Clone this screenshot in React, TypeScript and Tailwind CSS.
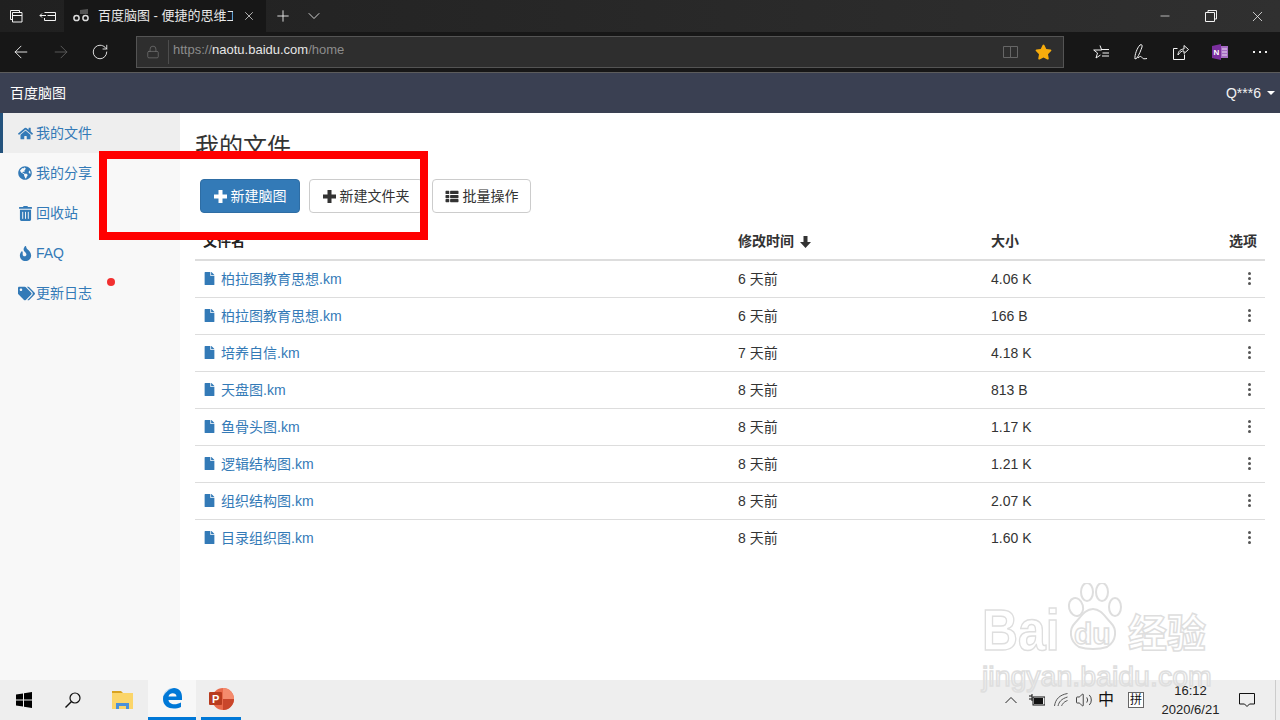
import React from "react";
import { FaHome, FaGlobeAmericas, FaTrashAlt, FaFire, FaTags, FaFile, FaThList, FaStar } from "react-icons/fa";
import { ArrowLeft, ArrowRight, RotateCw, Lock, Plus, ChevronDown, X, Minus, Volume2 } from "lucide-react";

const files = [
  ["柏拉图教育思想.km", "6 天前", "4.06 K"],
  ["柏拉图教育思想.km", "6 天前", "166 B"],
  ["培养自信.km", "7 天前", "4.18 K"],
  ["天盘图.km", "8 天前", "813 B"],
  ["鱼骨头图.km", "8 天前", "1.17 K"],
  ["逻辑结构图.km", "8 天前", "1.21 K"],
  ["组织结构图.km", "8 天前", "2.07 K"],
  ["目录组织图.km", "8 天前", "1.60 K"],
];

const nav = [
  { icon: <FaHome className="w-[15px] h-[15px]" />, label: "我的文件", active: true },
  { icon: <FaGlobeAmericas className="w-[14px] h-[14px]" />, label: "我的分享" },
  { icon: <FaTrashAlt className="w-[13px] h-[15px] ml-[1px]" />, label: "回收站" },
  { icon: <FaFire className="w-[13px] h-[15px] ml-[1px]" />, label: "FAQ" },
  { icon: <FaTags className="w-[17px] h-[15px]" />, label: "更新日志", dot: true },
];

function Stroke({ className, children, w = 16, h = 16 }: { className?: string; children: React.ReactNode; w?: number; h?: number }) {
  return (
    <svg width={w} height={h} viewBox={`0 0 ${w} ${h}`} fill="none" stroke="currentColor" strokeWidth="1" className={className}>
      {children}
    </svg>
  );
}

function SolidPlus() {
  return (
    <svg width="13" height="13" viewBox="0 0 13 13" fill="currentColor" className="shrink-0">
      <path d="M4.500 0h4v4.500h4.500v4h-4.500v4.500h-4v-4.500h-4.500v-4h4.500z" />
    </svg>
  );
}

function TabBar() {
  return (
    <div className="h-8 flex items-stretch bg-gradient-to-r from-[#202020] to-[#303030] text-[#f2f2f2] shrink-0">
      <div className="w-8 flex items-center justify-center">
        <Stroke w={16} h={16}>
          <path d="M2.500 2.500h9v2M2.500 2.500v9h2M4.500 4.500h9.500v9.500h-9.500zM4.500 7.500h9.500" />
        </Stroke>
      </div>
      <div className="w-8 flex items-center justify-center">
        <Stroke w={18} h={16}>
          <path d="M5.500 4.500h11v8h-11v-2.500M16.500 7.500h-8M7 7.500h-6M3 5.500l-2 2 2 2" />
        </Stroke>
      </div>
      <div className="w-[202px] bg-[#171717] flex items-center pl-[8px] pr-[8px]">
        <svg width="18" height="14" viewBox="0 0 18 14" className="shrink-0 mr-[8px]">
          <path d="M8 1l8-1v5l-8 0z" fill="#555" />
          <circle cx="4.500" cy="9" r="2.600" fill="none" stroke="#ddd" strokeWidth="1.500" />
          <circle cx="13.500" cy="9" r="2.600" fill="none" stroke="#ddd" strokeWidth="1.500" />
        </svg>
        <span className="w-[135px] shrink-0 overflow-hidden whitespace-nowrap text-[13px] text-[#e8e8e8]">百度脑图 - 便捷的思维工具</span>
        <X className="w-[14px] h-[14px] ml-[9px] shrink-0" strokeWidth={1.2} />
      </div>
      <div className="w-[34px] flex items-center justify-center">
        <Plus className="w-[18px] h-[18px]" strokeWidth={1.2} />
      </div>
      <div className="w-[28px] flex items-center justify-center">
        <ChevronDown className="w-[20px] h-[20px] shrink-0" strokeWidth={1} />
      </div>
      <div className="flex-1" />
      <div className="w-[46px] flex items-center justify-center">
        <Minus className="w-[14px] h-[14px]" strokeWidth={1.2} />
      </div>
      <div className="w-[46px] flex items-center justify-center">
        <Stroke w={12} h={12}>
          <path d="M3 2.500v-2h8.500v8.500h-2M.5 2.500h9v9h-9z" />
        </Stroke>
      </div>
      <div className="w-[46px] flex items-center justify-center">
        <X className="w-[17px] h-[17px]" strokeWidth={1.1} />
      </div>
    </div>
  );
}

function AddressRow() {
  return (
    <div className="h-[41px] bg-[#171717] border-b border-[#5c5c5c] flex items-center shrink-0">
      <div className="w-[40px] pl-[11px]"><ArrowLeft className="w-[20px] h-[20px] text-[#f2f2f2]" strokeWidth={1.1} /></div>
      <div className="w-[40px] pl-[11px]"><ArrowRight className="w-[20px] h-[20px] text-[#5e5e5e]" strokeWidth={1.1} /></div>
      <div className="w-[56px] pl-[11px]"><RotateCw className="w-[18px] h-[18px] text-[#f2f2f2]" strokeWidth={1.2} /></div>
      <div className="w-[928px] h-8 bg-[#2e2e2e] border border-[#545454] flex items-center -mt-[1px]">
        <Lock className="w-[14px] h-[14px] text-[#777777] ml-[9px]" strokeWidth={1.2} />
        <div className="w-px h-[24px] bg-[#4d4d4d] ml-[8px] mr-[4px]" />
        <span className="text-[13px] -mt-[3px] text-[#8c8c8c] whitespace-nowrap">https://<span className="text-[#e6e6e6]">naotu.baidu.com</span>/home</span>
        <div className="flex-1" />
        <Stroke w={16} h={14} className="text-[#666666] mr-[16px]">
          <path d="M.5 1.500h7v11h-7zM7.500 1.500h7v11h-7z" />
        </Stroke>
        <FaStar className="w-[17px] h-[16px] text-[#f7ac0c] mr-[11px]" />
      </div>
      <div className="flex-1 flex items-center text-[#f5f5f5] pl-[29px]">
        <Stroke w={18} h={17} className="mr-[23px]">
          <path d="M7 1.500l1.700 4.500h-8l3.800 3-1.500 5 4.500-3M9 5.500h7M9.500 9h6.500M9 12h7" />
        </Stroke>
        <Stroke w={16} h={18} className="mr-[23px]">
          <path d="M1 16c-.5-4 2-11 5-14 1.500-1 2.500 0 2 2-1 3-3 8-5 11zM4 15c2-2 3-2 4-.5s2 1.500 5 1" />
        </Stroke>
        <Stroke w={16} h={16} className="mr-[23px]">
          <path d="M.5 4.500h4M.5 4.500v11h11v-5M5 11c0-4 3-6 6-6v-3.500l4.500 4-4.500 4v-2.500c-2-.5-4 1-6 4z" />
        </Stroke>
        <svg width="16" height="16" viewBox="0 0 16 16" className="mr-[25px]">
          <path d="M0 2l9-2v16l-9-2z" fill="#7b2f9e" />
          <rect x="9" y="2" width="7" height="12" fill="#a66cc4" />
          <path d="M10 5h5M10 8h5M10 11h5" stroke="#e8d8f0" />
          <text x="1.500" y="11" fontSize="8" fontWeight="700" fill="#fff" fontFamily="Liberation Sans">N</text>
        </svg>
        <div className="flex gap-[4px]">
          <span className="w-[2px] h-[2px] bg-[#eeeeee]" />
          <span className="w-[2px] h-[2px] bg-[#eeeeee]" />
          <span className="w-[2px] h-[2px] bg-[#eeeeee]" />
        </div>
      </div>
    </div>
  );
}

function Sidebar() {
  return (
    <div className="w-[180px] bg-[#f8f8f8] shrink-0 text-[#337ab7] text-[14px]">
      {nav.map((n) => (
        <div
          key={n.label}
          className={`relative h-10 flex items-center ${n.active ? "bg-[#eeeeee] border-l-[3px] border-[#23527c] pl-[15px]" : "pl-[18px]"}`}
        >
          <span className="w-[18px] flex items-center">{n.icon}</span>
          <span>{n.label}</span>
          {n.dot && <span className="absolute left-[107px] top-[5px] w-2 h-2 rounded-full bg-[#f23030]" />}
        </div>
      ))}
    </div>
  );
}

function FileTable() {
  return (
    <div className="mt-[9px] mr-[15px] text-[14px]">
      <div className="h-[39px] flex items-end pb-[7px] border-b-2 border-[#dddddd] font-bold text-[#333333]">
        <div className="w-[535px] pl-[8px] text-[#222222]">文件名</div>
        <div className="w-[253px] pl-[8px] flex items-center gap-[6px]">
          修改时间
          <svg width="11" height="12" viewBox="0 0 11 12" fill="currentColor"><path d="M3.500 0h4v6h3.500l-5.500 6-5.500-6h3.500z" /></svg>
        </div>
        <div className="flex-1 pl-[8px]">大小</div>
        <div className="pr-[8px]">选项</div>
      </div>
      {files.map((f, i) => (
        <div key={i} className={`h-[37px] flex items-center text-[#333333] ${i < files.length - 1 ? "border-b border-[#dddddd]" : ""}`}>
          <div className="w-[535px] pl-[9px] flex items-center text-[#337ab7]">
            <FaFile className="w-[11px] h-[13px] mr-[6px] -mt-[2px]" />
            <span>{f[0]}</span>
          </div>
          <div className="w-[253px] pl-[8px]">{f[1]}</div>
          <div className="flex-1 pl-[8px]">{f[2]}</div>
          <div className="pr-[14px] flex flex-col gap-[2px] -mt-[2px]">
            <span className="w-[3px] h-[3px] rounded-full bg-[#555555]" />
            <span className="w-[3px] h-[3px] rounded-full bg-[#555555]" />
            <span className="w-[3px] h-[3px] rounded-full bg-[#555555]" />
          </div>
        </div>
      ))}
    </div>
  );
}

function Main() {
  return (
    <div className="flex-1 pl-[15px] bg-white">
      <div className="text-[24px] leading-[26px] text-[#333333] pt-[21px]">我的文件</div>
      <div className="flex pl-[5px] mt-[19px] text-[14px] leading-[20px] gap-[9px]">
        <div className="h-[34px] w-[100px] bg-[#337ab7] border border-[#2e6da4] rounded-[4px] text-white flex items-center justify-center gap-[4px]">
          <SolidPlus /> 新建脑图
        </div>
        <div className="h-[34px] w-[114px] bg-white border border-[#cccccc] rounded-[4px] text-[#333333] flex items-center justify-center gap-[4px]">
          <SolidPlus /> 新建文件夹
        </div>
        <div className="h-[34px] w-[99px] bg-white border border-[#cccccc] rounded-[4px] text-[#333333] flex items-center justify-center gap-[4px]">
          <FaThList className="w-[14px] h-[13px]" /> 批量操作
        </div>
      </div>
      <FileTable />
    </div>
  );
}

function Taskbar() {
  return (
    <div className="h-10 bg-[#eeeeee] flex items-stretch shrink-0 text-[#111111]">
      <div className="w-[48px] flex items-center justify-center">
        <svg width="16" height="16" viewBox="0 0 16 16"><path d="M0 2.500l7-1v6h-7zM8 1.300l8-1.300v7.500h-8zM0 8.500h7v6l-7-1zM8 8.500h8v7.500l-8-1.300z" fill="#000" /></svg>
      </div>
      <div className="w-[50px] flex items-center justify-center">
        <Stroke w={16} h={16}>
          <circle cx="10" cy="6" r="5" strokeWidth="1.200" />
          <path d="M6.500 9.500l-6 6" strokeWidth="1.400" />
        </Stroke>
      </div>
      <div className="w-[50px] flex items-center justify-center">
        <svg width="22" height="18" viewBox="0 0 22 18">
          <path d="M0 0h9l2 2h-11z" fill="#d9a321" />
          <rect y="2" width="21" height="16" fill="#fbd569" />
          <path d="M4 18v-6h13v6h-3v-3h-7v3z" fill="#4a90d9" />
        </svg>
      </div>
      <div className="w-[48px] bg-[#f7f7f7] border-b-[3px] border-[#0078d7] flex items-center justify-center">
        <svg width="21" height="21" viewBox="0 0 21 21">
          <path d="M20 12H6.500c.3 4 6 6 12.500 2.500v4.500c-8 3.500-18 1-18-8C1 5 6 0 12 0c5 0 8 3.500 8 9zM14.500 8.500c0-4-7-4.500-8 0z M1 9C2.500 3 7 0 12 0 6 1 3 5 1 9z" fill="#0078d7" fillRule="evenodd" />
        </svg>
      </div>
      <div className="w-[5px]" />
      <div className="w-[40px] border-b-[3px] border-[#0078d7] flex items-center justify-center">
        <svg width="25" height="22" viewBox="0 0 25 22">
          <circle cx="14" cy="11" r="11" fill="#e8694a" />
          <path d="M14 11h11a11 11 0 0 1-11 11z" fill="#c9462b" />
          <path d="M14 0a11 11 0 0 1 11 11h-11z" fill="#f48b6d" />
          <rect y="4" width="13" height="13" rx="1" fill="#b83b1e" />
          <text x="3" y="14.500" fontSize="11" fontWeight="700" fill="#fff" fontFamily="Liberation Sans">P</text>
        </svg>
      </div>
      <div className="flex-1" />
      <div className="flex items-center text-[#222222]">
        <Stroke w={12} h={8} className="mr-[12px]">
          <path d="M.5 7l5.500-5.500 5.500 5.500" />
        </Stroke>
        <svg width="16" height="12" viewBox="0 0 16 12" className="mr-[9px]">
          <path d="M0 2h3M0 5h3M3 0v7" stroke="#111" />
          <rect x="4" y="3" width="12" height="8" fill="none" stroke="#111" />
          <rect x="5" y="4" width="9" height="6" fill="#111" />
        </svg>
        <Stroke w={14} h={14} className="mr-[7px] text-[#555555]">
          <path d="M.5 13c1-7 5-11 13-12.500M4 13c1-4 3-7 9.500-9M7.500 13c1-2 2-4 6-5.500" />
        </Stroke>
        <span className="flex items-center mr-[5px]"><Volume2 className="w-[18px] h-[18px]" strokeWidth={1.1} /></span>
        <span className="text-[16px] mr-[14px] w-[16px] text-[#111111]">中</span>
        <span className="w-[16px] h-[16px] border border-[#666666] bg-white text-[12px] leading-[14px] text-center mr-[15px] text-[#111111]">拼</span>
      </div>
      <div className="w-[63px] flex flex-col items-center justify-center text-[13px] leading-[19px] text-[#222222] whitespace-nowrap">
        <span>16:12</span>
        <span>2020/6/21</span>
      </div>
      <div className="w-[58px] flex items-center pl-[17px] relative">
        <Stroke w={16} h={16}>
          <path d="M.5 1.500h15v10.500h-5l-2.500 2.500-2.500-2.500h-5z" />
        </Stroke>
        <div className="absolute right-[4px] top-0 h-full w-px bg-[#cccccc]" />
      </div>
    </div>
  );
}

export default function App() {
  return (
    <div className="relative w-[1280px] h-[720px] overflow-hidden flex flex-col font-['Liberation_Sans','Noto_Sans_CJK_SC',sans-serif] bg-white">
      <TabBar />
      <AddressRow />
      <div className="h-[40px] bg-[#3a4052] flex items-center justify-between pl-[10px] pr-[5px] text-[14px] text-white shrink-0">
        <span>百度脑图</span>
        <span className="flex items-center gap-[6px] text-[#f2f2f2]">
          Q***6
          <span className="w-0 h-0 border-x-[4px] border-x-transparent border-t-[4px] border-t-white" />
        </span>
      </div>
      <div className="flex-1 flex min-h-0">
        <Sidebar />
        <Main />
      </div>
      <Taskbar />

      <div className="absolute left-[99px] top-[151px] w-[329px] h-[89px] border-[8px] border-[#ff0000]" />

      <div className="absolute left-[982px] top-[583px] select-none text-transparent">
        <div className="flex items-end h-[76px]">
          <span className="w-[78px] inline-block origin-left scale-x-[0.86] text-[58px] leading-[58px] font-bold whitespace-nowrap [-webkit-text-stroke:1.5px_#dedede]">Bai</span>
          <span className="relative w-[68px] h-[76px]">
            <svg width="66" height="74" viewBox="0 0 66 74" className="absolute inset-0" fill="none" stroke="#dedede" strokeWidth="2">
              <ellipse cx="16" cy="24" rx="7" ry="9" transform="rotate(-15 16 24)" />
              <ellipse cx="27" cy="9" rx="6" ry="9" />
              <ellipse cx="42" cy="9" rx="6" ry="9" />
              <ellipse cx="55" cy="24" rx="6" ry="9" />
              <path d="M33 26c8 0 12 8 18 14 6 6 6 18-4 24-6 2-10 2-14 2s-8 0-14-2c-10-6-10-18-4-24 6-6 10-14 18-14z" />
            </svg>
            <span className="absolute left-[14px] top-[36px] text-[30px] leading-none font-bold [-webkit-text-stroke:1.5px_#dedede]">du</span>
          </span>
          <span className="text-[39px] leading-[50px] font-bold [-webkit-text-stroke:1.5px_#dedede]">经验</span>
        </div>
        <div className="text-[28.5px] leading-none mt-[3px] [-webkit-text-stroke:1.5px_#dedede] whitespace-nowrap">jingyan.baidu.com</div>
      </div>
    </div>
  );
}
